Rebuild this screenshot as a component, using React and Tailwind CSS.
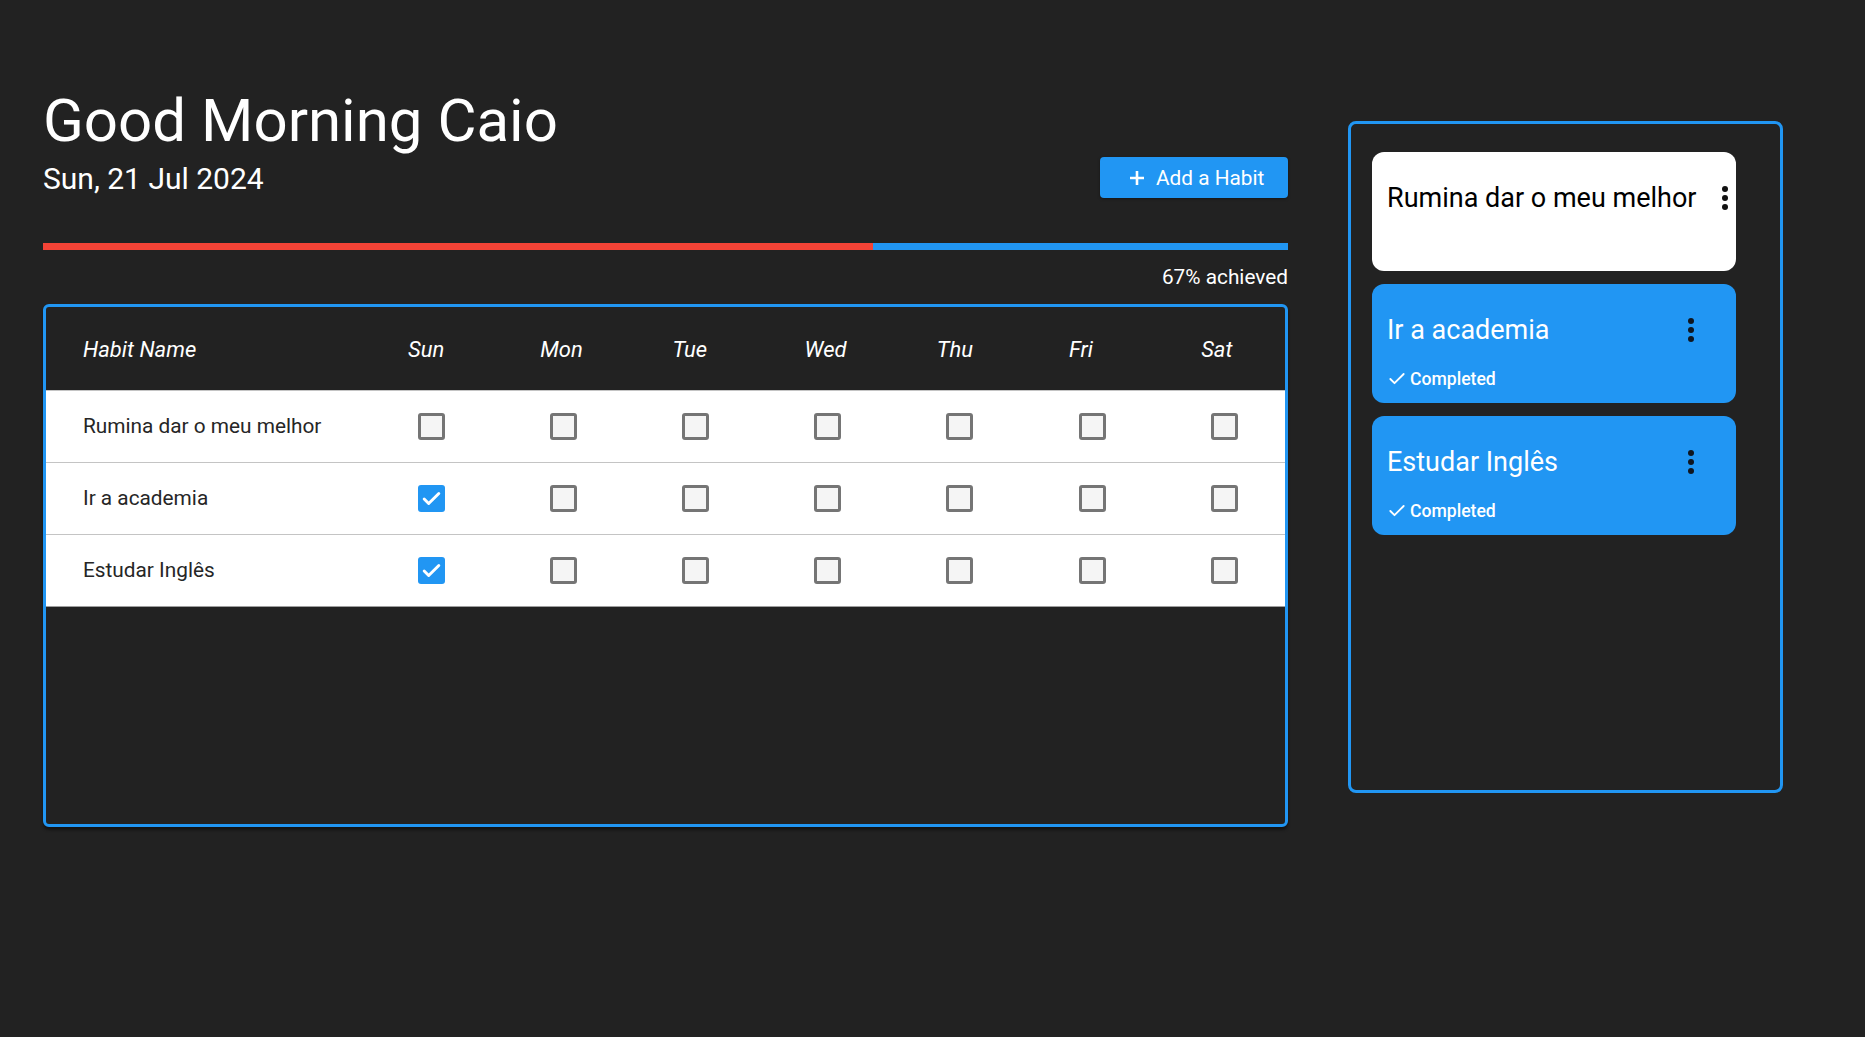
import React from "react";

const days = ["Sun", "Mon", "Tue", "Wed", "Thu", "Fri", "Sat"];
const habits = [
  { name: "Rumina dar o meu melhor", checks: [false, false, false, false, false, false, false] },
  { name: "Ir a academia", checks: [true, false, false, false, false, false, false] },
  { name: "Estudar Inglês", checks: [true, false, false, false, false, false, false] },
];

function Box({ checked }) {
  if (checked) {
    return (
      <div className="w-[27px] h-[27px] rounded-[3px] bg-[#2196f3] flex items-center justify-center">
        <svg width="27" height="27" viewBox="0 0 24 24" fill="none">
          <path d="M5.5 12.5l4 4L18.5 7.5" stroke="white" strokeWidth="2.6" strokeLinecap="round" strokeLinejoin="round" />
        </svg>
      </div>
    );
  }
  return <div className="w-[27px] h-[27px] rounded-[3px] border-[3px] border-[#757575] bg-[#f5f5f5]" />;
}

function Dots({ color }) {
  return (
    <svg width="36" height="36" viewBox="0 0 24 24" fill={color}>
      <circle cx="12" cy="6" r="2" />
      <circle cx="12" cy="12" r="2" />
      <circle cx="12" cy="18" r="2" />
    </svg>
  );
}

function Card({ title, completed }) {
  const dark = !completed;
  return (
    <div
      className={
        "h-[119px] rounded-[12px] pl-[15px] pr-4 pt-[17px] shrink-0 " +
        (completed ? "bg-[#2196f3] text-white" : "bg-white text-black")
      }
    >
      <div className="flex justify-between items-center h-[58px]">
        <span className="text-[27px] leading-[36px] whitespace-nowrap">{title}</span>
        <div className="w-[58px] h-[58px] shrink-0 flex items-center justify-center">
          <Dots color={dark ? "#111111" : "#0f1620"} />
        </div>
      </div>
      {completed && (
        <div className="mt-[8px] flex items-center h-[24px]">
          <svg width="20" height="20" viewBox="0 0 24 24" fill="none" stroke="white" strokeWidth="2.2" strokeLinecap="round" strokeLinejoin="round">
            <path d="M20 6 9 17l-5-5" />
          </svg>
          <span className="ml-[3px] text-[17.6px] leading-[24px] font-medium">Completed</span>
        </div>
      )}
    </div>
  );
}

export default function App() {
  return (
    <div className="w-full h-[1037px] bg-[#222222] font-[Roboto,sans-serif] overflow-hidden">
      <div className="flex items-start">
        <div className="ml-[43px] w-[1245px] pt-[85px] shrink-0">
          <div className="flex justify-between items-end">
            <div>
              <h1 className="text-[60px] leading-[72px] text-white font-normal">Good Morning Caio</h1>
              <div className="mt-[4px] text-[30px] leading-[36px] text-white">Sun, 21 Jul 2024</div>
            </div>
            <button className="mb-[-1px] h-[41px] w-[188px] rounded-[4px] bg-[#2196f3] text-white flex items-center pl-[29px] shadow-[0_1px_3px_rgba(0,0,0,0.4)]">
              <svg width="16" height="16" viewBox="0 0 16 16" fill="none" stroke="white" strokeWidth="2.6">
                <path d="M8 1v14M1 8h14" />
              </svg>
              <span className="ml-[11px] text-[20.8px] leading-[24px]">Add a Habit</span>
            </button>
          </div>
          <div className="mt-[46px] h-[7px] flex">
            <div className="h-full bg-[#f44336] w-[66.7%]" />
            <div className="h-full bg-[#2196f3] flex-1" />
          </div>
          <div className="mt-[12px] text-right text-white text-[20.8px] leading-[30px]">67% achieved</div>
          <div className="mt-[12px] h-[523px] border-[3px] border-[#2196f3] rounded-[6px] shadow-[0_3px_3px_rgba(0,0,0,0.45)] overflow-hidden">
            <div className="grid grid-cols-[319px_repeat(7,132.2px)] h-[83px] items-center text-white italic text-[22px] pt-[2px]">
              <div className="pl-[37px]">Habit Name</div>
              {days.map((d) => (
                <div key={d} className="text-left pl-[43px]">{d}</div>
              ))}
            </div>
            {habits.map((h, i) => (
              <div
                key={h.name}
                className={
                  "grid grid-cols-[319px_repeat(7,132.2px)] h-[72px] items-center bg-white border-t border-[#c4c4c4] " +
                  (i === habits.length - 1 ? "border-b border-b-[#9e9e9e] h-[73px]" : "")
                }
              >
                <div className="pl-[37px] text-[20.8px] text-[#262626]">{h.name}</div>
                {h.checks.map((c, j) => (
                  <div key={j} className="flex justify-center">
                    <Box checked={c} />
                  </div>
                ))}
              </div>
            ))}
          </div>
        </div>
        <div className="ml-[60px] mt-[121px] w-[435px] h-[672px] border-[3px] border-[#2196f3] rounded-[8px] pl-[21px] pt-[28px] flex flex-col gap-[13px] shrink-0">
          <div className="w-[364px] flex flex-col gap-[13px]">
            <Card title="Rumina dar o meu melhor" completed={false} />
            <Card title="Ir a academia" completed={true} />
            <Card title="Estudar Inglês" completed={true} />
          </div>
        </div>
      </div>
    </div>
  );
}
